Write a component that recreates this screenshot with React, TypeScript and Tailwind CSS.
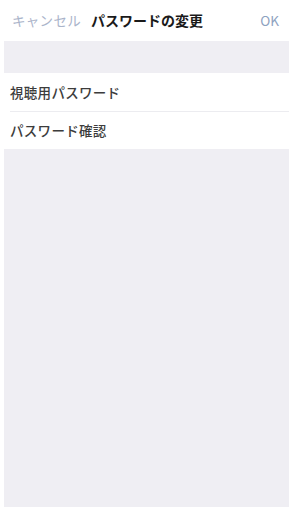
import React from "react";

export default function App() {
  return (
    <div
      className="w-[293px] h-[512px] bg-white pl-[4px] pr-[4px] pb-[5px] flex flex-col"
      style={{ fontFamily: '"Noto Sans CJK JP", "Noto Sans", sans-serif' }}
    >
      <div className="h-[41px] flex items-center justify-between bg-white pl-[8px] pr-[10px] shrink-0">
        <div className="flex items-center gap-[10px]">
          <span className="text-[13.5px] text-[#aab4ca] tracking-[0.3px]">キャンセル</span>
          <span className="text-[14px] font-bold text-[#1a1a1a]">パスワードの変更</span>
        </div>
        <span className="text-[13.5px] text-[#8ea2bf]">OK</span>
      </div>
      <div className="flex-1 bg-[#efeef3] flex flex-col">
        <div className="h-[32px] shrink-0" />
        <div className="bg-white">
          <div className="h-[38px] flex items-center pl-[6px] text-[13.5px] font-medium text-[#3c3c3c] tracking-[0.3px]">
            視聴用パスワード
          </div>
          <div className="h-px bg-[#ececf0] ml-[6px]" />
          <div className="h-[37px] flex items-center pl-[6px] text-[13.5px] font-medium text-[#3c3c3c] tracking-[0.3px]">
            パスワード確認
          </div>
        </div>
      </div>
    </div>
  );
}
